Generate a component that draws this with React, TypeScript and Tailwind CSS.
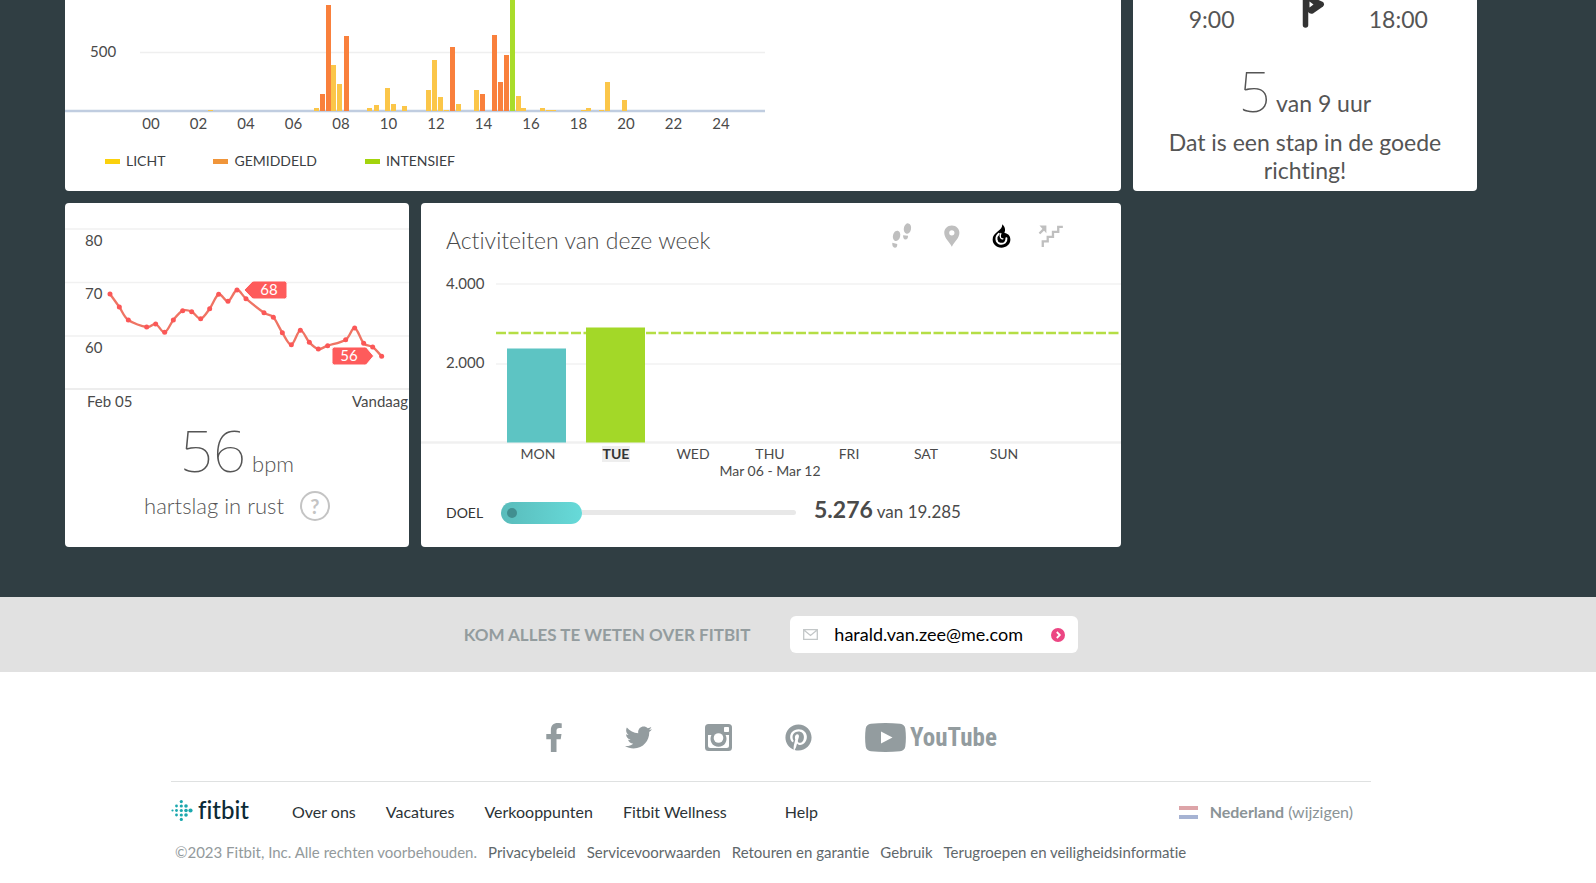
import { FaFacebookF, FaPinterest, FaTwitter } from "react-icons/fa";

type Bar = [x: number, top: number, kind: "light" | "medium" | "intense"];

const minuteBars: Bar[] = [
  [208, 110, "light"], [314, 108, "light"], [320, 94, "medium"], [326, 5, "medium"],
  [331, 65, "light"], [337, 84, "light"], [344, 36, "medium"], [367, 108, "light"],
  [374, 105, "light"], [385, 88, "light"], [391, 104, "light"], [402, 106, "light"],
  [426, 90, "light"], [432, 60, "light"], [438, 97, "light"], [444, 110, "light"],
  [450, 47, "medium"], [456, 104, "light"], [474, 90, "light"], [480, 94, "medium"],
  [492, 35, "medium"], [498, 82, "medium"], [504, 55, "medium"], [510, -5, "intense"],
  [516, 96, "light"], [521, 108, "light"], [540, 108, "light"], [546, 110, "light"],
  [551, 110, "light"], [581, 110, "light"], [586, 108, "light"], [599, 110, "light"],
  [605, 82, "light"], [622, 100, "light"],
];

const barFill = { light: "fill-[#fbc649]", medium: "fill-[#f9803c]", intense: "fill-[#a9dc2b]" };

const hours = ["00", "02", "04", "06", "08", "10", "12", "14", "16", "18", "20", "22", "24"];

const legend = [
  { label: "LICHT", swatch: "bg-[#fbd10d]" },
  { label: "GEMIDDELD", swatch: "bg-[#f0953a]" },
  { label: "INTENSIEF", swatch: "bg-[#a3d40d]" },
];

function MinutesCard() {
  return (
    <section className="col-span-2 overflow-hidden rounded-b bg-white">
      <svg viewBox="65 0 700 141" className="block h-[141px] w-[700px] max-w-full" role="img" aria-label="Actieve minuten">
        <path d="M140 52.5H765" className="stroke-[#efefef]" strokeWidth="1.5" />
        <path d="M65 111H765" className="stroke-[#c0cde0]" strokeWidth="2.4" />
        {minuteBars.map(([x, top, kind]) => (
          <rect key={x} x={x} y={top} width="5" height={111 - top} className={barFill[kind]} />
        ))}
        <text x="90" y="57" className="fill-[#4a4a4a] text-[15px]">500</text>
        {hours.map((h, i) => (
          <text key={h} x={151 + i * 47.5} y="129" textAnchor="middle" className="fill-[#4a4a4a] text-[15px]">{h}</text>
        ))}
      </svg>
      <ul className="flex gap-12 px-10 pt-2.5 pb-5 text-sm text-[#3c4043]">
        {legend.map((l) => (
          <li key={l.label} className="flex items-center gap-1.5">
            <span className={`h-[5px] w-[15px] ${l.swatch}`} />
            {l.label}
          </li>
        ))}
      </ul>
    </section>
  );
}

function HoursCard() {
  return (
    <section className="overflow-hidden rounded-b bg-white text-[23px] text-[#555]">
      <div className="grid h-[34px] grid-cols-3 px-8 text-center">
        <span className="pt-1 leading-[30px]">9:00</span>
        <svg viewBox="1286 0 40 30" className="mx-auto h-[30px] w-10" aria-hidden="true">
          <path d="M1306.5 -3V25" className="stroke-[#333]" strokeWidth="5.5" strokeLinecap="round" />
          <path d="M1309 -3L1315 -2L1324 2Q1326 4 1324 6.5L1314 13.5Q1311 14.5 1309 12Z" className="fill-[#333]" />
          <path d="M1310.5 1.5L1314.5 4.5L1310.5 7.5Z" className="fill-white" />
        </svg>
        <span className="pt-1 leading-[30px]">18:00</span>
      </div>
      <p className="h-[86px] pt-6 text-center leading-[64px]">
        <span className="font-['Noto_Sans',sans-serif] text-[56px] font-thin">5</span> van 9 uur
      </p>
      <p className="px-8 pt-2 pb-[7px] text-center leading-7">Dat is een stap in de goede richting!</p>
    </section>
  );
}

const pulse: [number, number][] = [
  [150, 297], [178, 336], [205, 375], [260, 396], [287, 387], [314, 412], [340, 375], [368, 347],
  [395, 350], [422, 371], [449, 341], [476, 298], [504, 319], [531, 285], [558, 311], [612, 353],
  [640, 367], [667, 413], [694, 449], [721, 406], [748, 442], [775, 462], [803, 452], [857, 434],
  [884, 399], [911, 445], [938, 456], [965, 484],
];

function smooth(points: [number, number][]) {
  return points
    .map(([x, y], i) => {
      if (i === 0) return `M${x} ${y}`;
      const [px, py] = points[i - 1];
      const before = points[i - 2] ?? points[i - 1];
      const after = points[i + 1] ?? points[i];
      return `C${px + (x - before[0]) / 6} ${py + (y - before[1]) / 6} ${x - (after[0] - px) / 6} ${y - (after[1] - py) / 6} ${x} ${y}`;
    })
    .join("");
}

function HeartCard() {
  return (
    <section className="overflow-hidden rounded bg-white text-center text-[#555]">
      <svg viewBox="65 203 344 217" className="block w-full" role="img" aria-label="Hartslag in rust per dag">
        <path d="M65 229H409M65 282.5H409M65 336H409" className="stroke-[#f1f1f1]" strokeWidth="1.5" />
        <path d="M65 389H409" className="stroke-[#ededed]" strokeWidth="2" />
        <g className="fill-[#4a4a4a] text-[15px]">
          <text x="85" y="246">80</text>
          <text x="85" y="299">70</text>
          <text x="85" y="353">60</text>
          <text x="87" y="407">Feb 05</text>
          <text x="352" y="407">Vandaag</text>
        </g>
        <g transform="translate(60 195) scale(0.33333)">
          <path d={smooth(pulse)} className="fill-none stroke-[#ef7464]" strokeWidth="7" />
          {pulse.map(([x, y]) => (
            <circle key={x} cx={x} cy={y} r="7.5" className="fill-[#fb5757]" />
          ))}
          <path d="M552 285L576 260Q578 258 582 258H674Q681 258 681 265V305Q681 312 674 312H582Q578 312 576 310Z" className="fill-[#fe5b5b] stroke-white" strokeWidth="3" />
          <path d="M941 483L920 458Q918 456 914 456H823Q816 456 816 463V503Q816 510 823 510H914Q918 510 920 508Z" className="fill-[#fe5b5b] stroke-white" strokeWidth="3" />
        </g>
        <g className="fill-white text-[15px]" textAnchor="middle">
          <text x="269" y="295">68</text>
          <text x="349" y="361">56</text>
        </g>
      </svg>
      <p className="h-[62px] text-[22px] leading-[60px] font-light">
        <span className="font-['Noto_Sans',sans-serif] text-[58px] font-thin">56</span> bpm
      </p>
      <div className="flex items-center justify-center gap-4 pt-2 pb-[25px]">
        <span className="text-[22px] leading-8 font-light">hartslag in rust</span>
        <button type="button" aria-label="Uitleg" className="flex size-[30px] items-center justify-center rounded-full border-2 border-[#c4c4c4] text-xl font-bold text-[#c4c4c4]">?</button>
      </div>
    </section>
  );
}

const days: [string, number][] = [["MON", 538], ["WED", 693], ["THU", 770], ["FRI", 849], ["SAT", 926], ["SUN", 1004]];

function StepsIcon() {
  return (
    <svg viewBox="357 80 68 82" className="h-[27px] w-[23px]" fill="#bfbfbf" aria-hidden="true">
      <ellipse cx="376" cy="122" rx="11" ry="16" transform="rotate(14 376 122)" />
      <path d="M363 143L378 147Q379 158 371 158Q362 157 363 143Z" />
      <ellipse cx="409" cy="100" rx="11" ry="16" transform="rotate(10 409 100)" />
      <path d="M396 120L411 122Q411 133 403 133Q395 132 396 120Z" />
    </svg>
  );
}

function PinIcon() {
  return (
    <svg viewBox="520 80 50 82" className="h-[27px] w-[17px]" fill="#bfbfbf" fillRule="evenodd" aria-hidden="true">
      <path d="M546 91C532 91 523 101 523 113C523 129 536 137 546 155C556 137 569 129 569 113C569 101 560 91 546 91ZM546 105A8 8 0 1 1 546 121A8 8 0 1 1 546 105Z" />
    </svg>
  );
}

function FlameIcon() {
  return (
    <svg viewBox="662 80 64 82" className="h-[27px] w-[21px]" aria-hidden="true">
      <path d="M696 87C708 98 705 107 703 113C716 115 722 124 721 135C720 150 708 158 694 158C678 158 667 147 667 133C667 122 673 116 683 108C691 102 697 97 696 87Z" fill="#000" />
      <path d="M686 116C675 125 676 143 690 146C702 148 710 141 709 129" fill="none" stroke="#fff" strokeWidth="6" strokeLinecap="round" />
      <path d="M692 115C688 124 691 132 698 131" fill="none" stroke="#fff" strokeWidth="4" strokeLinecap="round" />
    </svg>
  );
}

function StairsIcon() {
  return (
    <svg viewBox="807 80 78 82" className="h-[27px] w-[26px]" fill="none" stroke="#bfbfbf" strokeWidth="7" aria-hidden="true">
      <path d="M882 95H868V110H852V125H836V139H821V156" />
      <path d="M811 115L825 101" />
      <path d="M811 91H832V114Z" fill="#bfbfbf" stroke="none" />
    </svg>
  );
}

const metrics = [
  { label: "Stappen", Icon: StepsIcon },
  { label: "Afstand", Icon: PinIcon },
  { label: "Calorieën", Icon: FlameIcon },
  { label: "Verdiepingen", Icon: StairsIcon },
];

function WeekCard() {
  return (
    <section className="overflow-hidden rounded bg-white text-[#4a4a4a]">
      <header className="flex h-[65px] items-start justify-between pr-[45px] pl-[25px]">
        <h2 className="pt-[23px] text-[23px] leading-7 font-light">Activiteiten van deze week</h2>
        <div className="flex pt-[19px]">
          {metrics.map(({ label, Icon }) => (
            <button key={label} type="button" aria-label={label} className="flex w-[50px] justify-center">
              <Icon />
            </button>
          ))}
        </div>
      </header>
      <svg viewBox="421 268 700 217" className="block w-full" role="img" aria-label="Calorieën per dag">
        <path d="M496 284H1121M496 364H1121" className="stroke-[#f2f2f2]" strokeWidth="1.5" />
        <path d="M421 442.5H1121" className="stroke-[#f0f0f0]" strokeWidth="2.5" />
        <path d="M496 333H1119" className="stroke-[#b5de45]" strokeWidth="2.4" strokeDasharray="10 2.5" />
        <rect x="507" y="348.5" width="59" height="94" className="fill-[#5dc4c3]" />
        <rect x="586" y="327.5" width="59" height="115" className="fill-[#a3d828]" />
        <rect x="602" y="446" width="28" height="16" className="fill-[#eee]" />
        <g className="fill-[#4a4a4a] text-[15px]">
          <text x="446" y="289">4.000</text>
          <text x="446" y="368">2.000</text>
        </g>
        <g className="fill-[#4a4a4a] text-[14px]" textAnchor="middle">
          {days.map(([d, x]) => (
            <text key={d} x={x} y="459">{d}</text>
          ))}
          <text x="616" y="459" className="fill-[#333] font-bold">TUE</text>
          <text x="770" y="476">Mar 06 - Mar 12</text>
        </g>
      </svg>
      <div className="flex items-center pt-2.5 pb-2.5 pl-[25px]">
        <span className="w-[55px] text-sm text-[#333]">DOEL</span>
        <div role="progressbar" aria-label="Doel" aria-valuemin={0} aria-valuemax={19285} aria-valuenow={5276} className="flex w-[295px] items-center">
          <div className="flex h-[22px] w-[81px] items-center rounded-full bg-linear-to-r from-[#59bcbb] to-[#67dad9] pl-1.5">
            <span className="size-[10px] rounded-full bg-[#418f90]" />
          </div>
          <div className="h-[5px] flex-1 rounded-r-full bg-[#e8e8e8]" />
        </div>
        <p className="pb-1 pl-[18px] text-[17px] leading-7">
          <b className="text-[23px]">5.276</b> van 19.285
        </p>
      </div>
    </section>
  );
}

function Subscribe() {
  return (
    <form className="flex h-[75px] items-center justify-center gap-10 bg-[#e1e1e1] pr-[54px]" onSubmit={(e) => e.preventDefault()}>
      <label htmlFor="email" className="text-[17px] font-bold text-[#939c9e]">KOM ALLES TE WETEN OVER FITBIT</label>
      <div className="flex h-[37px] w-[288px] items-center rounded-md bg-white px-[13px]">
        <svg viewBox="0 0 15 11" className="h-[11px] w-[15px] shrink-0" fill="none" stroke="#c3c7c8" strokeWidth="1.3" aria-hidden="true">
          <path d="M.7.7H14.3V10.3H.7ZM1.5 1.5L7.5 6.5L13.5 1.5" />
        </svg>
        <input id="email" type="email" defaultValue="harald.van.zee@me.com" className="min-w-0 flex-1 pl-4 text-[18px] text-black outline-none" />
        <button type="submit" aria-label="Aanmelden" className="shrink-0">
          <svg viewBox="0 0 14 14" className="size-[14px]" aria-hidden="true">
            <circle cx="7" cy="7" r="7" fill="#ec4683" />
            <path d="M5.8 4L8.8 7L5.8 10" fill="none" stroke="#fff" strokeWidth="1.8" />
          </svg>
        </button>
      </div>
    </form>
  );
}

function InstagramIcon() {
  return (
    <svg viewBox="0 0 27 27" className="size-[27px]" aria-hidden="true">
      <rect width="27" height="27" rx="3.5" fill="#939c9f" />
      <path d="M3 11V21.5Q3 24 5.5 24H21.5Q24 24 24 21.5V11H20.5A8 8 0 1 1 6.5 11Z" fill="#fff" />
      <circle cx="13.5" cy="14" r="7.3" fill="#939c9f" />
      <circle cx="13.5" cy="14" r="4.8" fill="#fff" />
      <rect x="19" y="3" width="5" height="5" rx=".8" fill="#fff" />
    </svg>
  );
}

function Social() {
  return (
    <nav aria-label="Sociale media" className="flex items-center justify-center gap-[53px] border-b border-[#dfe1e1] pt-[51px] pb-[29px] text-[#939c9f]">
      <a href="#facebook" aria-label="Facebook" className="flex w-[27px] items-center">
        <FaFacebookF className="h-[29px] w-[18px]" />
      </a>
      <a href="#twitter" aria-label="Twitter"><FaTwitter size={27} /></a>
      <a href="#instagram" aria-label="Instagram"><InstagramIcon /></a>
      <a href="#pinterest" aria-label="Pinterest"><FaPinterest size={27} /></a>
      <a href="#youtube" className="flex items-center gap-1">
        <svg viewBox="0 0 41 29" className="h-[29px] w-[41px]" aria-hidden="true">
          <path d="M6 .8Q20.5-.8 35 .8Q39.5 1.2 40.3 5.5Q41.5 14.5 40.3 23.5Q39.5 27.8 35 28.2Q20.5 29.8 6 28.2Q1.5 27.8.7 23.5Q-.5 14.5.7 5.5Q1.5 1.2 6 .8Z" fill="currentColor" />
          <path d="M16 8.5L27.5 14.5L16 20.5Z" fill="#fff" />
        </svg>
        <span className="font-['Roboto_Condensed','Roboto',sans-serif] text-[25px] leading-7 font-bold">YouTube</span>
      </a>
    </nav>
  );
}

const logoDots: [number, number, number][] = [
  [1.5, 10.5, 1.1], [5.5, 6, 1.4], [5.5, 10.5, 1.4], [5.5, 15, 1.4],
  [10.3, 1.6, 1.6], [10.3, 6, 1.6], [10.3, 10.5, 1.6], [10.3, 15, 1.6], [10.3, 19.4, 1.6],
  [15, 6, 1.8], [15, 10.5, 1.8], [15, 15, 1.8], [19.5, 10.5, 2.1],
];

function Footer() {
  const link = "hover:underline";
  return (
    <footer className="mx-auto w-full max-w-[1200px]">
      <Social />
      <div className="flex items-center pt-3.5 text-[16px] leading-8 text-[#2b3336]">
        <a href="#fitbit" className="flex w-[121px] items-center gap-[5px] pb-1 text-[#0b2a36]">
          <svg viewBox="0 0 22 21" className="h-[21px] w-[22px]" fill="#1ba8ae" aria-hidden="true">
            {logoDots.map(([x, y, r]) => (
              <circle key={`${x}-${y}`} cx={x} cy={y} r={r} />
            ))}
          </svg>
          <span className="text-[24px] leading-6 font-medium">fitbit</span>
        </a>
        <nav aria-label="Fitbit" className="flex gap-[30px]">
          <a href="#over" className={link}>Over ons</a>
          <a href="#vacatures" className={link}>Vacatures</a>
          <a href="#verkooppunten" className={link}>Verkooppunten</a>
          <a href="#wellness" className={link}>Fitbit Wellness</a>
          <a href="#help" className="pl-7 hover:underline">Help</a>
        </nav>
        <a href="#land" className="ml-auto flex items-center gap-3 pr-[18px] text-[#8b9497]">
          <svg viewBox="0 0 19 13" className="h-[13px] w-[19px]" aria-hidden="true">
            <rect width="19" height="4" fill="#dda4a8" />
            <rect y="9" width="19" height="4" fill="#a6b3d3" />
          </svg>
          <span><b>Nederland</b> (wijzigen)</span>
        </a>
      </div>
      <div className="flex gap-[11px] pt-3 pb-3.5 pl-1 text-[15px] leading-6 text-[#5f686b]">
        <span className="text-[#939a9c]">©2023 Fitbit, Inc. Alle rechten voorbehouden.</span>
        <a href="#privacy" className={link}>Privacybeleid</a>
        <a href="#service" className={link}>Servicevoorwaarden</a>
        <a href="#retour" className={link}>Retouren en garantie</a>
        <a href="#gebruik" className={link}>Gebruik</a>
        <a href="#veiligheid" className={link}>Terugroepen en veiligheidsinformatie</a>
      </div>
    </footer>
  );
}

export default function App() {
  return (
    <div className="bg-white font-['Lato',sans-serif] [font-variant-ligatures:none]">
      <main className="bg-[#303e43] pr-[54px] pb-[50px]">
        <div className="mx-auto grid max-w-[1412px] grid-cols-[344fr_700fr_344fr] gap-3">
          <MinutesCard />
          <HoursCard />
          <HeartCard />
          <WeekCard />
        </div>
      </main>
      <Subscribe />
      <div className="pr-[54px]">
        <Footer />
      </div>
    </div>
  );
}
